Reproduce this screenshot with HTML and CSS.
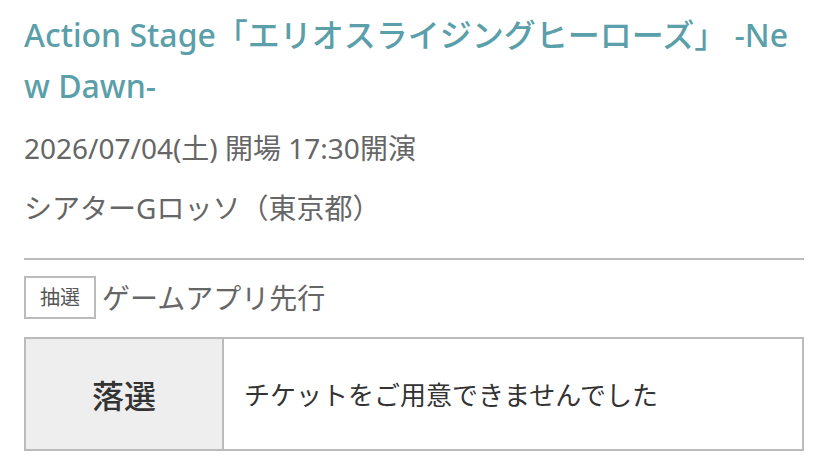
FILE: index.html
```html
<!DOCTYPE html>
<html lang="ja">
<head>
<meta charset="utf-8">
<title>Action Stage</title>
<link rel="stylesheet" href="styles.css">
</head>
<body>
<main class="page">
  <h1 class="title">Action Stage「エリオスライジングヒーローズ」 -New Dawn-</h1>
  <p class="date">2026/07/04(土) 開場 17:30開演</p>
  <p class="venue">シアターGロッソ（東京都）</p>
  <hr class="divider">
  <div class="sale">
    <span class="tag">抽選</span>
    <span class="sale-name">ゲームアプリ先行</span>
  </div>
  <div class="result">
    <div class="result-status">落選</div>
    <div class="result-message">チケットをご用意できませんでした</div>
  </div>
</main>
</body>
</html>
```
FILE: styles.css
```css
html, body {
  margin: 0;
  padding: 0;
  background: #ffffff;
}
body {
  font-family: "Noto Sans", "Noto Sans CJK JP", sans-serif;
  color: #666666;
}
.page {
  padding: 9px 24px 0 24px;
}
.title {
  margin: 0;
  font-size: 32px;
  font-weight: 500;
  line-height: 51px;
  color: #5a9fa9;
  word-break: break-all;
}
.date {
  margin: 17px 0 0 0;
  font-size: 28px;
  line-height: 40px;
}
.venue {
  margin: 20px 0 0 0;
  font-size: 28px;
  line-height: 40px;
}
.divider {
  margin: 30px 0 0 0;
  border: 0;
  height: 2px;
  background: #bbbbbb;
}
.sale {
  margin-top: 16px;
  display: flex;
  align-items: center;
  gap: 6px;
}
.tag {
  box-sizing: border-box;
  height: 43px;
  width: 72px;
  border: 2px solid #bbbbbb;
  font-size: 20px;
  line-height: 39px;
  text-align: center;
  color: #555555;
}
.sale-name {
  font-size: 28px;
  line-height: 40px;
}
.result {
  margin-top: 18px;
  display: grid;
  grid-template-columns: 198px 1fr;
  border: 2px solid #bbbbbb;
  height: 110px;
}
.result-status {
  background: #eeeeee;
  border-right: 2px solid #bbbbbb;
  display: flex;
  align-items: center;
  justify-content: center;
  font-size: 32px;
  font-weight: 500;
  color: #333333;
}
.result-message {
  display: flex;
  align-items: center;
  padding-left: 20px;
  font-size: 26px;
  color: #333333;
}
```
